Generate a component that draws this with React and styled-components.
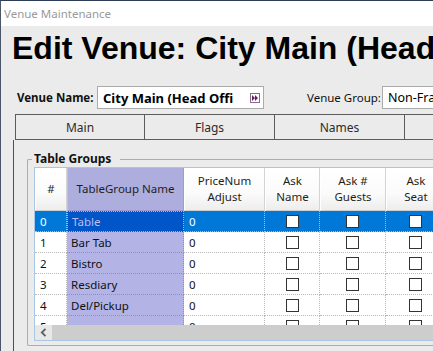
import React from 'react';
import styled, { createGlobalStyle } from 'styled-components';

const GlobalStyle = createGlobalStyle`
  html, body {
    margin: 0;
    padding: 0;
    background: #ebebeb;
  }
  body {
    font-family: "Noto Sans", "Open Sans", sans-serif;
    font-size: 11.5px;
  }
`;

const columns = '32px 117px 81px 55px 66px 60px';

const Window = styled.div`
  width: 432px;
  height: 350px;
  overflow: hidden;
  background: #ebebeb;
  border-top: 1px solid #2d3d57;
  border-left: 1px solid #4a5568;
  display: flex;
  flex-direction: column;
`;

const TitleBar = styled.div`
  height: 25px;
  flex: none;
  background: #ffffff;
  color: #9a9a9a;
  font-size: 11.5px;
  line-height: 25px;
  padding-left: 3px;
`;

const Heading = styled.h1`
  margin: 7px 0 0 11px;
  font-family: "Liberation Sans", Arial, sans-serif;
  font-weight: bold;
  font-size: 32px;
  line-height: 31px;
  white-space: nowrap;
  color: #000;
`;

const FieldRow = styled.div`
  display: flex;
  align-items: center;
  height: 23px;
  margin-top: 22px;
  padding-left: 16px;
  white-space: nowrap;
`;

const Label = styled.span`
  width: ${p => p.$width}px;
  flex: none;
  font-weight: ${p => (p.$bold ? 700 : 400)};
  color: #111;
`;

const TextBox = styled.div`
  display: flex;
  align-items: center;
  box-sizing: border-box;
  height: 23px;
  width: ${p => p.$width}px;
  flex: none;
  background: #ffffff;
  border: 1px solid #ababab;
  padding: 0 3px 0 5px;
  margin-right: ${p => p.$gap || 0}px;
  font-size: ${p => (p.$bold ? 13 : 12.5)}px;
  font-weight: ${p => (p.$bold ? 700 : 400)};
  color: #000;
`;

const BoxText = styled.span`
  flex: 1;
  overflow: hidden;
  white-space: nowrap;
`;

const BrowseButton = styled.span`
  display: flex;
  align-items: center;
  justify-content: center;
  width: 10px;
  height: 10px;
  box-sizing: border-box;
  border: 1px solid #8a6a8a;
  margin-left: 4px;
  flex: none;
`;

const Tabs = styled.div`
  display: flex;
  margin: 5px 0 0 14px;
  height: 25px;
  border-bottom: 1px solid #5c5c5c;
`;

const Tab = styled.div`
  width: 130px;
  flex: none;
  box-sizing: border-box;
  border: 1px solid #5c5c5c;
  border-bottom: none;
  border-left: ${p => (p.$first ? '1px solid #5c5c5c' : 'none')};
  display: flex;
  align-items: center;
  justify-content: center;
  color: #2b2b2b;
  font-size: 12px;
`;

const Panel = styled.div`
  flex: 1;
  margin-left: 12px;
  border-left: 1px solid #4f4f4f;
  padding: 11px 0 0 13px;
`;

const GroupBox = styled.fieldset`
  margin: 0;
  padding: 0 0 4px 6px;
  border: 1px solid #adadad;
  border-right: none;
  border-radius: 2px 0 0 2px;
  min-width: 0;
`;

const Legend = styled.legend`
  font-weight: 700;
  font-size: 12px;
  line-height: 16px;
  padding: 0 9px 0 2px;
  margin-left: -2px;
  color: #111;
`;

const Grid = styled.div`
  border: 1px solid #a9c7e3;
  border-right: none;
  width: 420px;
  overflow: hidden;
  background: #ffffff;
`;

const HeaderRow = styled.div`
  display: grid;
  grid-template-columns: ${columns};
  height: 43px;
`;

const HeaderCell = styled.div`
  display: flex;
  align-items: center;
  justify-content: center;
  text-align: center;
  line-height: 16px;
  color: #1e1e1e;
  box-sizing: border-box;
  border-right: 1px solid ${p => (p.$accent ? '#9d9dd3' : '#d4d4d4')};
  border-left: 1px solid ${p => (p.$accent ? '#bdbdec' : '#ffffff')};
  border-bottom: 1px solid ${p => (p.$accent ? '#9d9dd3' : '#cfcfcf')};
  background: ${p =>
    p.$accent ? '#adadde' : 'linear-gradient(#ffffff 0%, #fbfbfb 60%, #ededed 100%)'};
`;

const Body = styled.div`
  height: 114px;
  overflow: hidden;
`;

const Row = styled.div`
  display: grid;
  grid-template-columns: ${columns};
  height: 21px;
  background: ${p => (p.$selected ? '#0078d7' : '#ffffff')};
  color: ${p => (p.$selected ? '#ffffff' : '#111111')};
`;

const Cell = styled.div`
  box-sizing: border-box;
  display: flex;
  align-items: center;
  justify-content: ${p => (p.$center ? 'center' : 'flex-start')};
  padding-left: ${p => (p.$center ? 0 : p.$pad || 4)}px;
  border-right: 1px dotted #b9b9b9;
  border-bottom: 1px dotted #b9b9b9;
  white-space: nowrap;
  overflow: hidden;
`;

const NameCell = styled(Cell)`
  background: ${p => (p.$selected ? '#0055c9' : '#b3b3e6')};
  color: ${p => (p.$selected ? '#bdbdf0' : '#111111')};
  border: ${p => (p.$selected ? '1px dotted #9fb6e8' : 'none')};
  border-bottom: 1px dotted ${p => (p.$selected ? '#9fb6e8' : '#8e8ebc')};
  border-right: 1px dotted ${p => (p.$selected ? '#9fb6e8' : '#8e8ebc')};
`;

const CheckBox = styled.span`
  width: 13px;
  height: 13px;
  box-sizing: border-box;
  background: #ffffff;
  border: 1px solid #333333;
`;

const ScrollBar = styled.div`
  display: flex;
  height: 15px;
  background: #cdcdcd;
`;

const ScrollArrow = styled.div`
  width: 17px;
  flex: none;
  background: #e8e8e8;
  display: flex;
  align-items: center;
  justify-content: center;
`;

const rows = [
  { id: 0, name: 'Table', price: '0' },
  { id: 1, name: 'Bar Tab', price: '0' },
  { id: 2, name: 'Bistro', price: '0' },
  { id: 3, name: 'Resdiary', price: '0' },
  { id: 4, name: 'Del/Pickup', price: '0' },
  { id: 5, name: '', price: '0' },
];

const FastForward = () => (
  <svg width="6" height="6" viewBox="0 0 6 6">
    <path d="M0 0 L3 3 L0 6 Z M3 0 L6 3 L3 6 Z" fill="#6b1b6b" />
  </svg>
);

const ChevronLeft = () => (
  <svg width="7" height="9" viewBox="0 0 7 9">
    <path d="M5.5 0.8 L1.8 4.5 L5.5 8.2" fill="none" stroke="#606060" strokeWidth="1.8" />
  </svg>
);

const App = () => {
  return (
    <Window>
      <GlobalStyle />
      <TitleBar>Venue Maintenance</TitleBar>
      <Heading>Edit Venue: City Main (Head Office)</Heading>
      <FieldRow>
        <Label $bold $width={80}>Venue Name:</Label>
        <TextBox $width={167} $gap={43} $bold>
          <BoxText>City Main (Head Offi</BoxText>
          <BrowseButton><FastForward /></BrowseButton>
        </TextBox>
        <Label $width={75}>Venue Group:</Label>
        <TextBox $width={120}>
          <BoxText>Non-Franchise</BoxText>
        </TextBox>
      </FieldRow>
      <Tabs>
        <Tab $first>Main</Tab>
        <Tab>Flags</Tab>
        <Tab>Names</Tab>
        <Tab>Options</Tab>
      </Tabs>
      <Panel>
        <GroupBox>
          <Legend>Table Groups</Legend>
          <Grid>
            <HeaderRow>
              <HeaderCell>#</HeaderCell>
              <HeaderCell $accent>TableGroup Name</HeaderCell>
              <HeaderCell>PriceNum<br />Adjust</HeaderCell>
              <HeaderCell>Ask<br />Name</HeaderCell>
              <HeaderCell>Ask #<br />Guests</HeaderCell>
              <HeaderCell>Ask<br />Seat</HeaderCell>
            </HeaderRow>
            <Body>
              {rows.map(r => {
                const sel = r.id === 0;
                return (
                  <Row key={r.id} $selected={sel}>
                    <Cell $pad={5}>{r.id}</Cell>
                    <NameCell $selected={sel}>{r.name}</NameCell>
                    <Cell $pad={5}>{r.price}</Cell>
                    <Cell $center><CheckBox /></Cell>
                    <Cell $center><CheckBox /></Cell>
                    <Cell $center><CheckBox /></Cell>
                  </Row>
                );
              })}
            </Body>
            <ScrollBar>
              <ScrollArrow><ChevronLeft /></ScrollArrow>
            </ScrollBar>
          </Grid>
        </GroupBox>
      </Panel>
    </Window>
  );
};

export default App;
